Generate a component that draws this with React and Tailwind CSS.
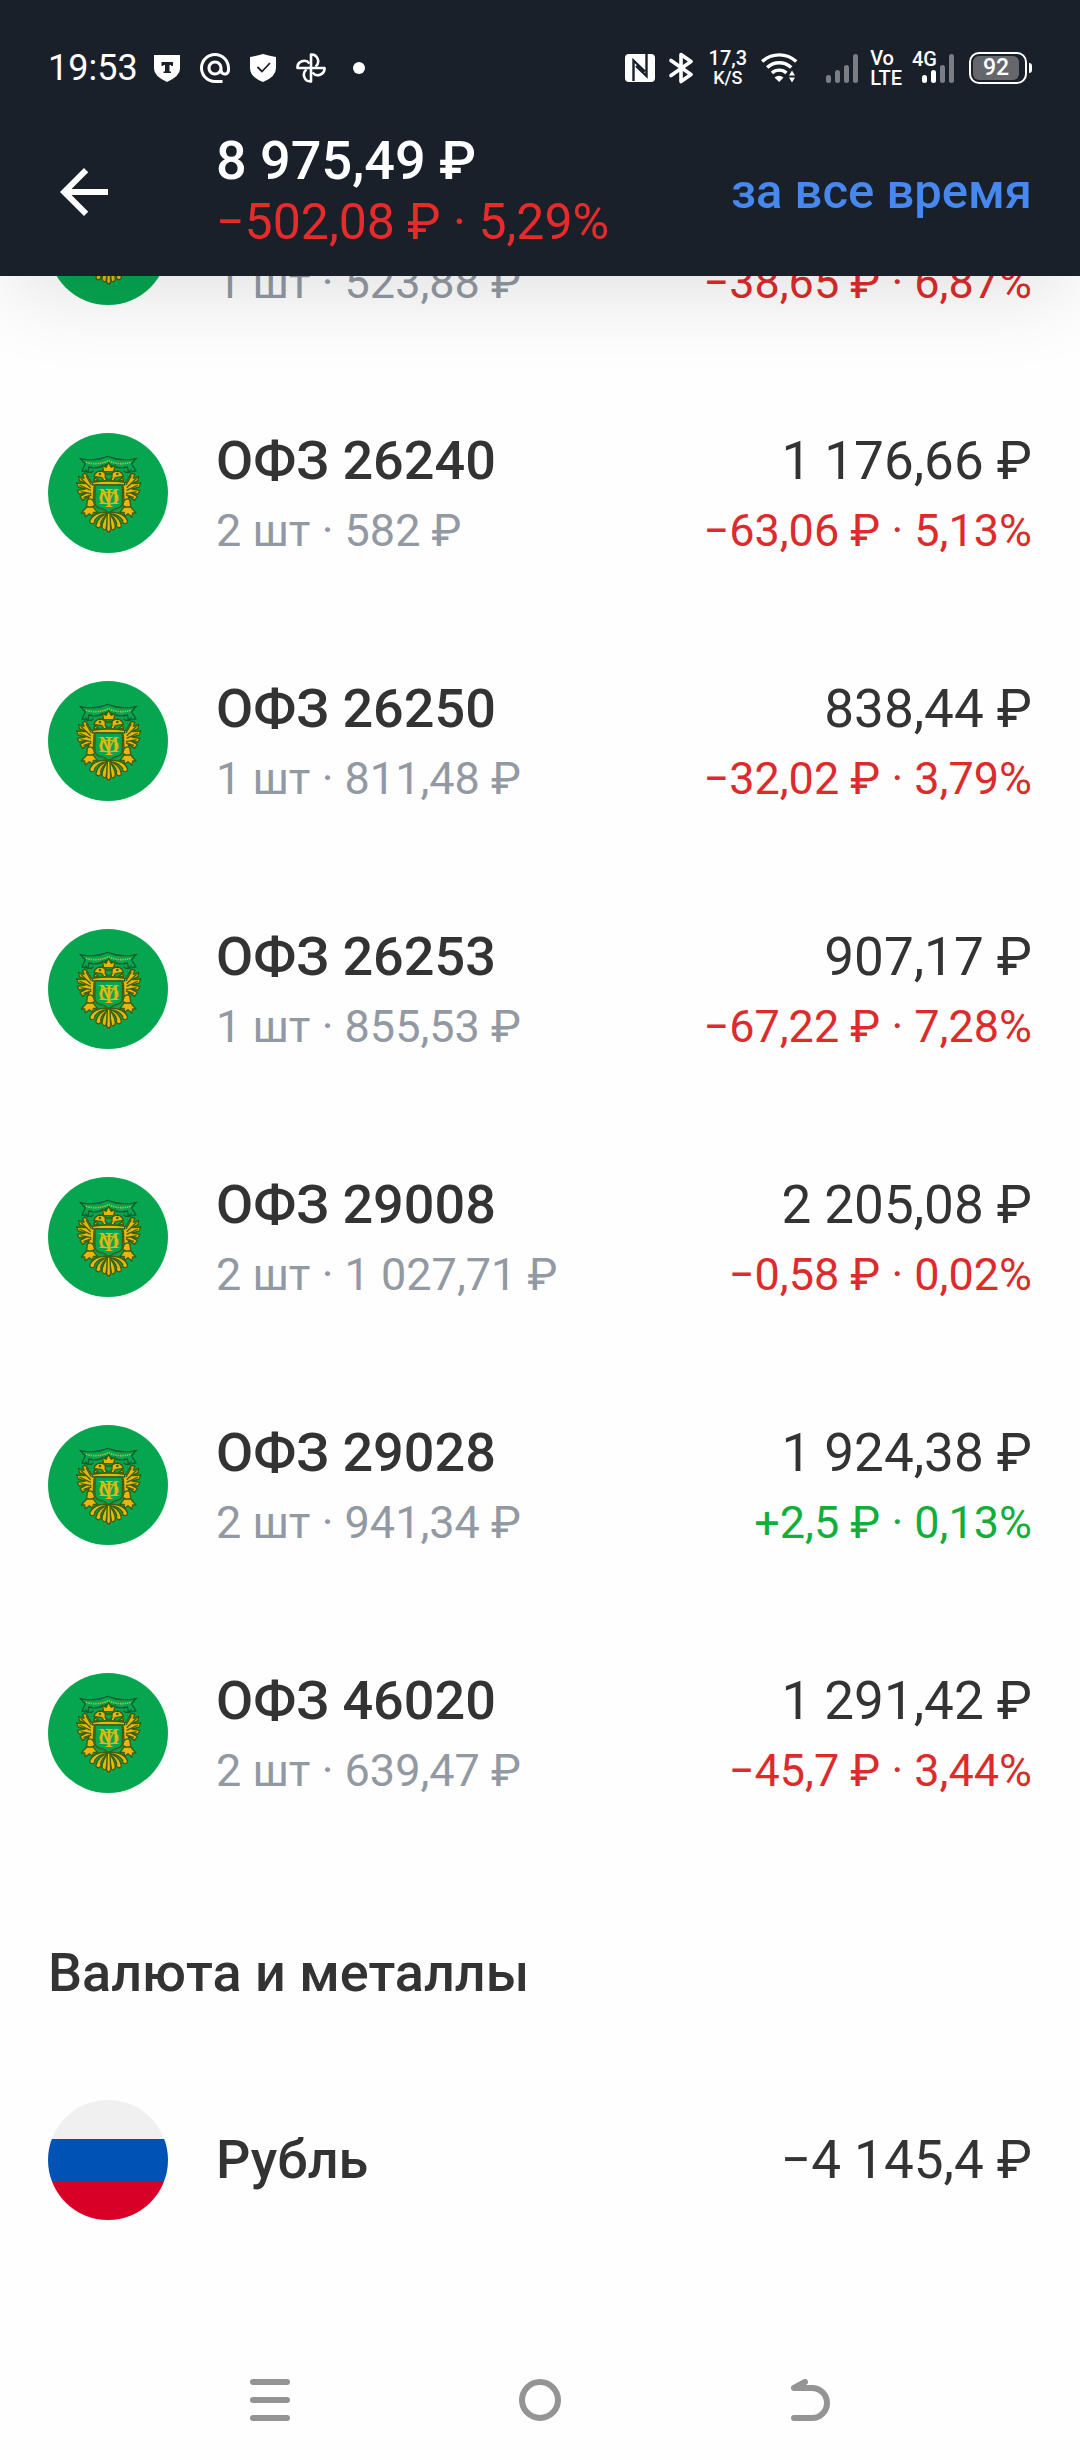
import { MdAlternateEmail, MdArrowBack } from 'react-icons/md';

const bonds = [
  { id: 'scrolled', details: '1 шт · 523,88 ₽', change: '−38,65 ₽ · 6,87%' },
  { id: '26240', name: 'ОФЗ 26240', details: '2 шт · 582 ₽', total: '1 176,66 ₽', change: '−63,06 ₽ · 5,13%' },
  { id: '26250', name: 'ОФЗ 26250', details: '1 шт · 811,48 ₽', total: '838,44 ₽', change: '−32,02 ₽ · 3,79%' },
  { id: '26253', name: 'ОФЗ 26253', details: '1 шт · 855,53 ₽', total: '907,17 ₽', change: '−67,22 ₽ · 7,28%' },
  { id: '29008', name: 'ОФЗ 29008', details: '2 шт · 1 027,71 ₽', total: '2 205,08 ₽', change: '−0,58 ₽ · 0,02%' },
  { id: '29028', name: 'ОФЗ 29028', details: '2 шт · 941,34 ₽', total: '1 924,38 ₽', change: '+2,5 ₽ · 0,13%' },
  { id: '46020', name: 'ОФЗ 46020', details: '2 шт · 639,47 ₽', total: '1 291,42 ₽', change: '−45,7 ₽ · 3,44%' },
];

function SignalBars({ active = 0 }) {
  return (
    <svg viewBox="0 0 32 30" className="h-[30px] w-8" aria-hidden="true">
      {[8, 13, 18, 29].map((height, i) => (
        <rect
          key={height}
          x={i * 9}
          y={30 - height}
          width="5"
          height={height}
          rx="2.5"
          fill={i < active ? '#ffffff' : '#7b7d85'}
        />
      ))}
    </svg>
  );
}

function StatusBar() {
  return (
    <div className="flex h-[108px] items-center justify-between px-12 pt-7 text-white">
      <div className="flex items-center gap-5">
        <span className="text-[36px] leading-10">19:53</span>
        <svg viewBox="0 0 26 28" className="-ml-1 h-7 w-[26px]" aria-hidden="true">
          <path d="M0 1h26v14q0 7-13 13Q0 22 0 15z" fill="#fff" />
          <path d="M7.500 8h11.500v4h-1.500l-.7-1h-1.300v6.500h1.500V19h-7.500v-1.500h1.500V11H9.700L9 12H7.500z" fill="#19202a" />
        </svg>
        <MdAlternateEmail className="-mx-[3px] size-9" />
        <svg viewBox="0 0 26 28" className="h-7 w-[26px]" aria-hidden="true">
          <path d="M13 0Q20 2 26 3v11q0 9-13 14Q0 23 0 14V3Q6 2 13 0z" fill="#fff" />
          <path d="M7.500 13l4.500 4.500 8-8.500" fill="none" stroke="#19202a" strokeWidth="1.800" />
        </svg>
        <svg viewBox="-15 -15 30 30" className="size-[30px]" aria-hidden="true">
          <g fill="none" stroke="#fff" strokeWidth="2.600" strokeLinejoin="round">
            {[0, 90, 180, 270].map((angle) => (
              <path key={angle} transform={`rotate(${angle})`} d="M0 0V-13.500A6.700 6.700 0 0 1 4.500-1.500" />
            ))}
          </g>
        </svg>
        <span className="ml-[7px] size-3 rounded-full bg-white" />
      </div>

      <div className="flex items-center">
        <svg viewBox="0 0 30 28" className="h-7 w-[30px]" aria-hidden="true">
          <rect width="30" height="28" rx="4" fill="#fff" />
          <path d="M8.500 27V6.500l11.500 11M21.500 0v22L11 12" fill="none" stroke="#19202a" strokeWidth="2.400" />
        </svg>
        <svg viewBox="0 0 24 32" className="ml-3.5 h-8 w-6" aria-hidden="true">
          <path
            d="M2 8.500L22 22.500 12 29.500V2.500L22 9.500 2 23.500"
            fill="none"
            stroke="#fff"
            strokeWidth="3.600"
            strokeLinejoin="round"
            strokeLinecap="round"
          />
        </svg>
        <div className="ml-4 flex flex-col items-center font-medium">
          <span className="text-[20px] leading-5">17,3</span>
          <span className="text-[18px] leading-5">K/S</span>
        </div>
        <svg viewBox="0 0 37 30" className="ml-3.5 h-[30px] w-[37px]" aria-hidden="true">
          <g fill="none" stroke="#fff" strokeWidth="3.400">
            <path d="M1.200 8.500a25 25 0 0 1 34 0" />
            <path d="M6.200 14.500a17.500 17.500 0 0 1 24 0" />
            <path d="M11 20a10.500 10.500 0 0 1 14.400 0" />
          </g>
          <path d="M13.500 24.500q4.500-3.500 9 0L18.200 29z" fill="#fff" />
          <path d="M28 22.500l3-5 3 5zM28 24.500l3 5 3-5z" fill="#fff" />
        </svg>
        <div className="ml-7">
          <SignalBars />
        </div>
        <div className="ml-3 flex flex-col text-[20px] leading-5 font-medium">
          <span>Vo</span>
          <span>LTE</span>
        </div>
        <div className="relative ml-5">
          <SignalBars active={2} />
          <span className="absolute -top-1 -left-2.5 text-[20px] leading-5 font-medium">4G</span>
        </div>
        <div className="ml-[15px] flex items-center gap-0.5">
          <div className="flex h-8 w-[58px] items-center rounded-[10px] border-2 border-white p-0.5">
            <span className="flex h-6 w-[46px] items-center justify-center rounded-md bg-[#65676d] text-[23px] leading-6 font-medium">
              92
            </span>
          </div>
          <span className="h-2.5 w-[3px] rounded-r-sm bg-white" />
        </div>
      </div>
    </div>
  );
}

function Header() {
  return (
    <header className="sticky top-0 z-10 bg-[#19202a] shadow-[0_32px_80px_-16px_rgba(0,0,0,0.12)]">
      <StatusBar />
      <div className="flex h-[168px] items-center px-12">
        <button type="button" aria-label="Назад" className="text-white">
          <MdArrowBack className="size-[72px]" />
        </button>
        <div className="ml-24 flex-1 whitespace-nowrap">
          <h1 className="text-[54px] leading-[60px] font-medium text-white">8 975,49 ₽</h1>
          <p className="text-[50px] leading-[62px] text-[#e62b2b]">−502,08 ₽ · 5,29%</p>
        </div>
        <button type="button" className="text-[49px] leading-[60px] font-medium text-[#4788ee]">
          за все время
        </button>
      </div>
    </header>
  );
}

// One half of the eagle, mirrored for the other side
function EagleHalf() {
  return (
    <g>
      <path d="M-14-30L-52-32Q-60-46-68-58L-78-57-74-44-90-50-88-37-70-28-96-30-92-18-70-12-94-8-88 3-66 0-86 10-78 22-58 8-64 26-46 20-44-18-14-18z" />
      <path d="M-68-52L-52-24M-84-44L-54-16M-88-24L-54-8M-84-4L-52 2M-76 14L-52 6" fill="none" />
      <path d="M-8-34Q-18-38-20-46L-44-50Q-40-64-26-66-12-66-6-52z" />
      <circle cx="-26" cy="-57" r="2" fill="#1d4d16" />
      <path d="M-42-46L-30-38-44-36z" />
      <path d="M-64 22Q-56 12-46 24L-42 36-54 46-66 40z" />
      <path d="M-66 42L-82 60-72 60-70 72-58 62-48 70-46 58-34 58-46 42z" />
      <path d="M-4 58Q-44 56-56 82-58 92-48 92-40 90-42 82-30 64-4 62z" />
      <path d="M-4 62Q-32 70-38 96-38 106-28 104-20 100-24 92-20 74-4 66z" />
      <path d="M-4 64Q-18 80-20 102-16 114-8 108L-2 66z" />
    </g>
  );
}

function BondLogo() {
  return (
    <svg viewBox="-180 -180 360 360" className="size-[120px] shrink-0 rounded-full bg-[#06a651]" aria-hidden="true">
      <g fill="#06a651" stroke="#165c2c" strokeWidth="4" strokeLinejoin="round">
        <path d="M-68-88L-84-104Q-42-92 0-110 42-92 86-104L70-88 84-66 62-62 58-78Q28-70 0-88-28-70-58-78L-60-62-78-66z" />
        <path d="M-68-70q10 14 24 4M70-70q-10 14-24 4" fill="none" />
      </g>
      <path
        d="M-66-92Q-32-82 2-97 34-82 68-92"
        fill="none"
        stroke="#9fc33d"
        strokeWidth="5"
        strokeDasharray="4 3"
      />
      <g transform="translate(2 0)" fill="#e9b60c" stroke="#3f5d10" strokeWidth="4" strokeLinejoin="round">
        <EagleHalf />
        <g transform="scale(-1 1)">
          <EagleHalf />
        </g>
        <path d="M-15-64L-19-84-8-77 0-92 8-77 19-84 15-64z" />
        <path d="M-10-57H10V-46L0-38-10-46z" fill="#06a651" />
        <path d="M-48-32Q0-40 48-32V-24H-48z" />
        <path d="M-41-24H41V32Q38 46 18 48L0 58-18 48Q-38 46-41 32z" fill="#06a651" />
        <path d="M-4 60H4L6 112 0 118-6 112z" />
      </g>
      <g fill="#e0b810" fontFamily="Liberation Serif, serif" textAnchor="middle">
        <text x="2" y="34" fontSize="72">М</text>
        <text x="2" y="42" fontSize="80">Ф</text>
      </g>
    </svg>
  );
}

function RubleLogo() {
  return (
    <span className="flex size-[120px] shrink-0 flex-col overflow-hidden rounded-full">
      <span className="h-[39px] bg-[#f0f0f0]" />
      <span className="h-[42px] bg-[#0052b4]" />
      <span className="h-[39px] bg-[#d80027]" />
    </span>
  );
}

function AssetRow({ logo, name, details, total, change }) {
  const changeColor = change?.startsWith('+') ? 'text-[#12ae3a]' : 'text-[#dd2b2b]';

  return (
    <li className="flex h-[248px] items-center gap-12 px-12 whitespace-nowrap">
      {logo}
      <div className="flex-1">
        <h3 className="min-h-[76px] text-[54px] leading-[76px] font-medium">{name}</h3>
        {details && <p className="text-[45px] leading-16 text-[#9299a2]">{details}</p>}
      </div>
      <div className="text-right">
        <p className="min-h-[76px] text-[53px] leading-[76px]">{total}</p>
        {change && <p className={`text-[45px] leading-16 ${changeColor}`}>{change}</p>}
      </div>
    </li>
  );
}

function NavigationBar() {
  return (
    <nav className="flex h-[120px] items-center justify-around px-[135px] text-[#949494]">
      <button type="button" aria-label="Недавние">
        <svg viewBox="0 0 42 42" className="size-[42px]" fill="none" stroke="currentColor" strokeWidth="6" strokeLinecap="round">
          <path d="M4 3h34M4 21h34M4 39h34" />
        </svg>
      </button>
      <button type="button" aria-label="Домой">
        <svg viewBox="0 0 42 42" className="size-[42px]" fill="none" stroke="currentColor" strokeWidth="6">
          <circle cx="21" cy="21" r="18" />
        </svg>
      </button>
      <button type="button" aria-label="Назад">
        <svg viewBox="0 0 42 42" className="size-[42px]" fill="none" stroke="currentColor" strokeWidth="6" strokeLinecap="round" strokeLinejoin="round">
          <path d="M16 3L5 9h18a15 15 0 0 1 0 30H5" />
        </svg>
      </button>
    </nav>
  );
}

export default function App() {
  return (
    <div className="flex min-h-screen flex-col bg-[#fefefe] font-['Roboto',sans-serif] text-[#333333]">
      <Header />
      <main className="-mt-[155px] flex-1">
        <ul>
          {bonds.map((bond) => (
            <AssetRow key={bond.id} logo={<BondLogo />} {...bond} />
          ))}
        </ul>
        <h2 className="px-12 pt-20 text-[54px] leading-[72px] font-medium">Валюта и металлы</h2>
        <ul className="mt-[27px]">
          <AssetRow logo={<RubleLogo />} name="Рубль" total="−4 145,4 ₽" />
        </ul>
      </main>
      <NavigationBar />
    </div>
  );
}
